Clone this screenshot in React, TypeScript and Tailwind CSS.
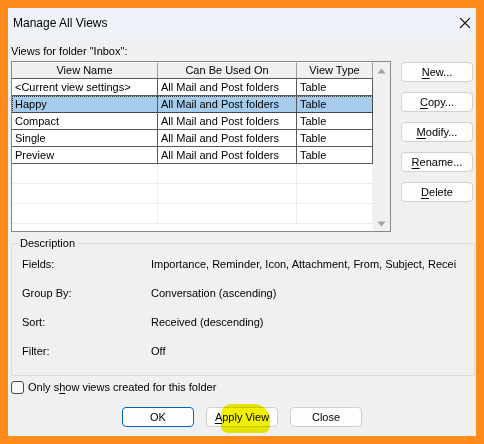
import React from 'react';

const font = { fontFamily: '"Liberation Sans", Arial, sans-serif' };

const views = [
  { name: '<Current view settings>', usedOn: 'All Mail and Post folders', type: 'Table' },
  { name: 'Happy', usedOn: 'All Mail and Post folders', type: 'Table' },
  { name: 'Compact', usedOn: 'All Mail and Post folders', type: 'Table' },
  { name: 'Single', usedOn: 'All Mail and Post folders', type: 'Table' },
  { name: 'Preview', usedOn: 'All Mail and Post folders', type: 'Table' },
];

// only the part of the Fields list that fits the dialog is shown
const details = [
  { label: 'Fields:', value: 'Importance, Reminder, Icon, Attachment, From, Subject, Recei' },
  { label: 'Group By:', value: 'Conversation (ascending)' },
  { label: 'Sort:', value: 'Received (descending)' },
  { label: 'Filter:', value: 'Off' },
];

// button label with an underlined access key
const Key = ({ k, rest }: { k: string; rest: string }) => (
  <span>
    <span className="underline underline-offset-[2px]">{k}</span>
    {rest}
  </span>
);

const SideButton = ({ children }: { children: React.ReactNode }) => (
  <button className="h-[20px] w-[72px] rounded-[4px] border border-[#d0d0d0] bg-[#fdfdfd] text-[11px] leading-none text-black">
    {children}
  </button>
);

export default function App() {
  return (
    <div className="h-[444px] w-[484px] bg-[#ff8c1c] p-[8px] text-[11px] text-black" style={font}>
      <div className="flex h-[428px] w-[468px] flex-col overflow-hidden bg-[#f0f0f0]">
        {/* title bar */}
        <div className="flex h-[30px] items-center justify-between bg-[#eff3f9] pl-[5px] pr-[5px]">
          <span className="text-[12px]">Manage All Views</span>
          <svg width="12" height="12" viewBox="0 0 12 12">
            <path d="M1 1 L11 11 M11 1 L1 11" stroke="#1a1a1a" strokeWidth="1.1" />
          </svg>
        </div>

        <div className="flex flex-1 flex-col px-[3px]">
          <div className="mb-[2px] pt-[6px] leading-[15px]">Views for folder "Inbox":</div>

          <div className="flex gap-[10px]">
            {/* list view */}
            <div className="flex h-[171px] w-[380px] border border-[#828790] bg-white">
              <div className="flex w-[361px] flex-col">
                <div className="flex h-[17px] border-b border-[#5a5a5a] bg-[#f0f0f0] leading-[15px]">
                  <div className="w-[146px] border-r border-[#a0a0a0] border-t border-t-white text-center">View Name</div>
                  <div className="w-[139px] border-r border-[#a0a0a0] border-t border-t-white text-center">Can Be Used On</div>
                  <div className="w-[76px] border-r border-[#a0a0a0] border-t border-t-white text-center">View Type</div>
                </div>
                {views.map((v, i) => (
                  <div
                    key={v.name}
                    className={
                      i === 1
                        ? 'flex h-[17px] border-b border-[#5a5a5a] bg-[#a6cdee] leading-[16px] outline-1 outline-dotted outline-offset-[-1px] outline-[#333]'
                        : 'flex h-[17px] border-b border-[#5a5a5a] leading-[16px]'
                    }
                  >
                    <div className="w-[146px] border-r border-[#5a5a5a] pl-[3px] whitespace-nowrap">{v.name}</div>
                    <div className="w-[139px] border-r border-[#5a5a5a] pl-[3px] whitespace-nowrap">{v.usedOn}</div>
                    <div className="w-[76px] border-r border-[#5a5a5a] pl-[3px]">{v.type}</div>
                  </div>
                ))}
                {[0, 1, 2].map((r) => (
                  <div key={r} className="flex h-[20px] border-b border-dotted border-[#dcdcdc]">
                    <div className="w-[146px] border-r border-dotted border-[#dcdcdc]" />
                    <div className="w-[139px] border-r border-dotted border-[#dcdcdc]" />
                    <div className="w-[76px] border-r border-dotted border-[#dcdcdc]" />
                  </div>
                ))}
              </div>
              {/* scrollbar */}
              <div className="flex w-[17px] flex-col items-center justify-between bg-[#f0f0f0] pb-[4px] pt-[6px]">
                <svg width="9" height="6" viewBox="0 0 9 6">
                  <path d="M0.5 5.5 L4.5 0.5 L8.5 5.5 Z" fill="#a3a3a3" />
                </svg>
                <svg width="9" height="6" viewBox="0 0 9 6">
                  <path d="M0.5 0.5 L4.5 5.5 L8.5 0.5 Z" fill="#a3a3a3" />
                </svg>
              </div>
            </div>

            {/* side buttons */}
            <div className="flex flex-col gap-[10px] pt-[1px]">
              <SideButton><Key k="N" rest="ew..." /></SideButton>
              <SideButton><Key k="C" rest="opy..." /></SideButton>
              <SideButton><Key k="M" rest="odify..." /></SideButton>
              <SideButton><Key k="R" rest="ename..." /></SideButton>
              <SideButton><Key k="D" rest="elete" /></SideButton>
            </div>
          </div>

          {/* description */}
          <fieldset className="mr-[-2px] mt-[4px] min-w-0 border border-[#dcdcdc] pb-[9px] pl-[10px]">
            <legend className="ml-[-4px] px-[2px] leading-[14px]">Description</legend>
            {details.map((d) => (
              <div key={d.label} className="flex h-[29px] items-center whitespace-nowrap">
                <span className="w-[129px] shrink-0">{d.label}</span>
                <span>{d.value}</span>
              </div>
            ))}
          </fieldset>

          <label className="mt-[4px] flex h-[15px] items-center gap-[4px]">
            <span className="h-[13px] w-[13px] rounded-[3px] border border-[#4a4a4a] bg-[#f8f8f8]" />
            <span>
              Only s<span className="underline underline-offset-[2px]">h</span>ow views created for this folder
            </span>
          </label>

          <div className="mt-[12px] flex justify-center gap-[12px]">
            <button className="h-[20px] w-[72px] rounded-[4px] border border-[#0067c0] bg-[#fdfdfd] leading-none">OK</button>
            <button className="relative h-[20px] w-[72px] rounded-[4px] border border-[#d0d0d0] bg-[#fdfdfd] leading-none">
              <Key k="A" rest="pply View" />
              <span className="absolute left-[14px] top-[-4px] h-[29px] w-[49px] rounded-tl-[10px] rounded-tr-[16px] rounded-b-[7px] bg-[#f2f200] mix-blend-multiply" />
            </button>
            <button className="h-[20px] w-[72px] rounded-[4px] border border-[#d0d0d0] bg-[#fdfdfd] leading-none">Close</button>
          </div>
        </div>
      </div>
    </div>
  );
}
